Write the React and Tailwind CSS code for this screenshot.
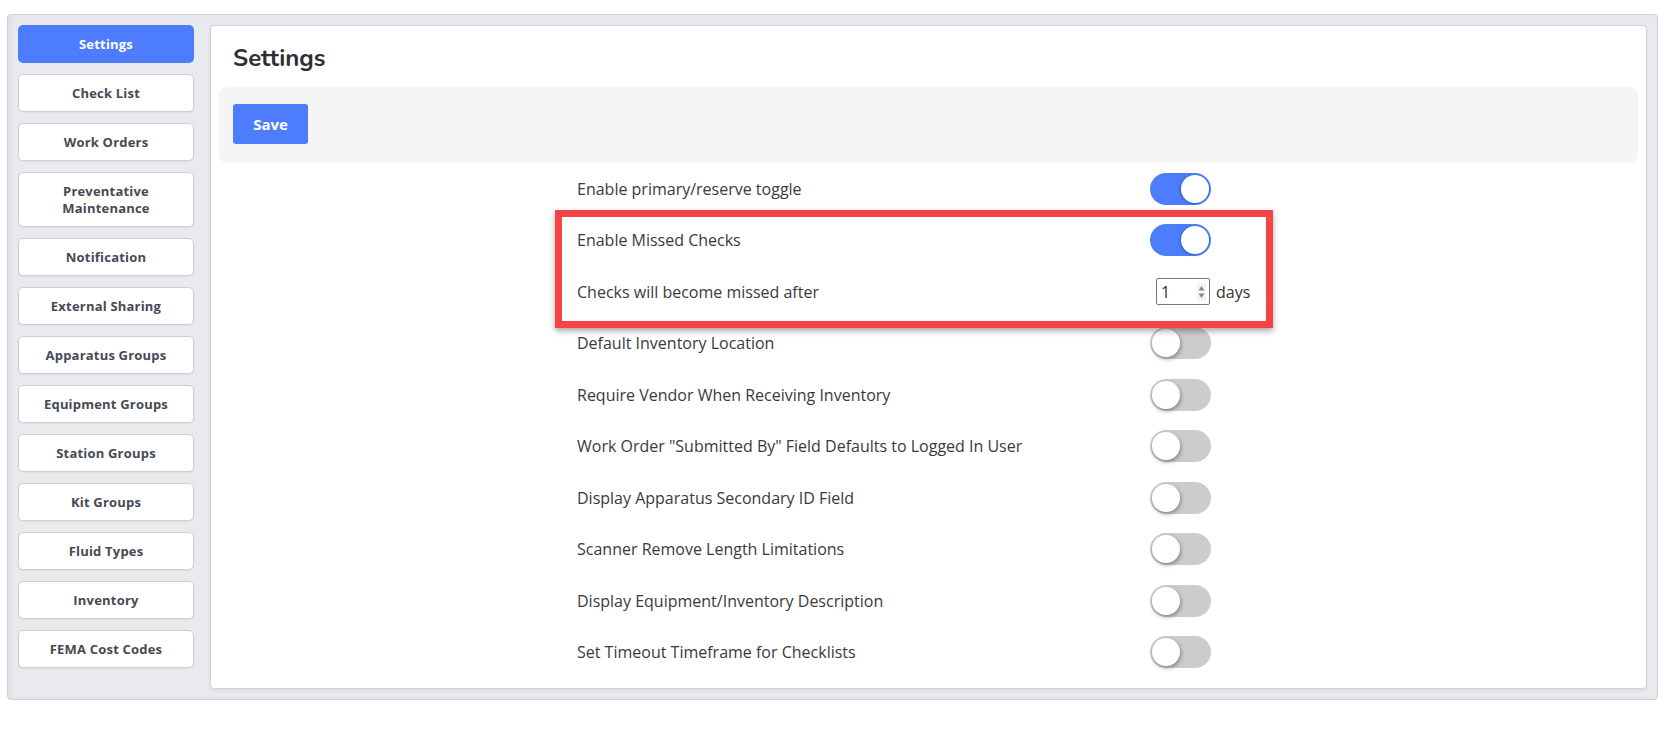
import React, { useState } from 'react';

const navItems = [
  'Settings',
  'Check List',
  'Work Orders',
  'Preventative Maintenance',
  'Notification',
  'External Sharing',
  'Apparatus Groups',
  'Equipment Groups',
  'Station Groups',
  'Kit Groups',
  'Fluid Types',
  'Inventory',
  'FEMA Cost Codes',
];

const initialSettings = [
  { id: 'primary', label: 'Enable primary/reserve toggle', on: true },
  { id: 'missed', label: 'Enable Missed Checks', on: true },
  { id: 'missedAfter', label: 'Checks will become missed after', days: 1 },
  { id: 'invLocation', label: 'Default Inventory Location', on: false },
  { id: 'vendor', label: 'Require Vendor When Receiving Inventory', on: false },
  { id: 'submittedBy', label: 'Work Order "Submitted By" Field Defaults to Logged In User', on: false },
  { id: 'secondaryId', label: 'Display Apparatus Secondary ID Field', on: false },
  { id: 'scanner', label: 'Scanner Remove Length Limitations', on: false },
  { id: 'description', label: 'Display Equipment/Inventory Description', on: false },
  { id: 'timeout', label: 'Set Timeout Timeframe for Checklists', on: false },
];

function Toggle({ on, onClick }) {
  return (
    <button
      onClick={onClick}
      className={`relative flex items-center w-[61px] h-[32px] rounded-full transition-colors ${on ? 'bg-[#4d7dfd] justify-end' : 'bg-[#cccccc] justify-start'}`}
    >
      <span
        className={`block w-[28px] h-[28px] mx-[2px] rounded-full bg-white ${on ? 'shadow-[0_0_0_1px_rgba(60,110,220,0.6),-1px_1px_3px_rgba(0,0,0,0.25)]' : 'shadow-[1px_2px_4px_rgba(0,0,0,0.35)]'}`}
      />
    </button>
  );
}

function DaysInput({ value }) {
  return (
    <div className="flex items-center gap-[6px] ml-[6px]">
      <div className="flex items-center justify-between w-[54px] h-[27px] border border-[#767676] rounded-[2px] bg-white pl-[4px] pr-[3px]">
        <span className="text-[16px] text-[#333]">{value}</span>
        <svg width="9" height="18" viewBox="0 0 9 18" className="bg-[#f5f5f5]">
          <path d="M1.5 7.5 L4.5 3 L7.5 7.5 Z" fill="#8a8a8a" />
          <path d="M1.5 10.5 L4.5 15 L7.5 10.5 Z" fill="#8a8a8a" />
        </svg>
      </div>
      <span className="text-[16px] text-[#333]">days</span>
    </div>
  );
}

export default function App() {
  const [settings, setSettings] = useState(initialSettings);
  const [active, setActive] = useState('Settings');

  const flip = (id) =>
    setSettings((s) => s.map((x) => (x.id === id ? { ...x, on: !x.on } : x)));

  return (
    <div className="min-h-screen bg-white pt-[14px] px-[7px] font-['Open_Sans',sans-serif]">
      <div className="flex gap-[16px] p-[10px] bg-[#e9eaee] border border-[#cfcfd2] rounded-[4px] shadow-[inset_4px_0_6px_rgba(0,0,0,0.04)] w-[1651px]">
        {/* SIDEBAR */}
        <div className="flex flex-col gap-[11px] w-[176px] shrink-0">
          {navItems.map((item) => {
            const isActive = item === active;
            const tall = item === 'Preventative Maintenance';
            return (
              <button
                key={item}
                onClick={() => setActive(item)}
                className={`flex items-center justify-center text-center px-4 rounded-[5px] text-[13px] font-bold leading-[17px] tracking-[0.2px] ${tall ? 'h-[55px]' : 'h-[38px]'} ${isActive ? 'bg-[#4d7dfd] text-white' : 'bg-white text-[#454a55] border border-[#cfcfcf] shadow-[0_1px_2px_rgba(0,0,0,0.06)]'}`}
              >
                {item}
              </button>
            );
          })}
        </div>

        {/* MAIN */}
        <div className="relative flex-1 h-[664px] bg-white border border-[#d2d2d4] rounded-[4px] shadow-[0_2px_4px_rgba(0,0,0,0.06)] px-[8px]">
          <h1 className="pl-[14px] pt-[14px] h-[61px] text-[24px] font-bold text-[#2d2f33] font-['Nunito','Lato',sans-serif]">Settings</h1>
          <div className="bg-[#f5f5f5] rounded-[8px] h-[76px] pl-[14px] pt-[17px]">
            <button className="w-[75px] h-[40px] bg-[#4d7dfd] text-white text-[15px] font-bold rounded-[3px]">Save</button>
          </div>

          <div className="ml-[358px] w-[700px]">
            {settings.map((s) => (
              <div key={s.id} className="grid grid-cols-[573px_1fr] items-center h-[51.5px]">
                <span className="text-[16px] text-[#3a3a3a]">{s.label}</span>
                <div>
                  {s.days !== undefined ? <DaysInput value={s.days} /> : <Toggle on={s.on} onClick={() => flip(s.id)} />}
                </div>
              </div>
            ))}
          </div>

          {/* annotation box */}
          <div className="absolute left-[344px] top-[184px] w-[718px] h-[118px] border-[7px] border-[#f54346] shadow-[0_3px_6px_rgba(0,0,0,0.35)] pointer-events-none" />
        </div>
      </div>
    </div>
  );
}
